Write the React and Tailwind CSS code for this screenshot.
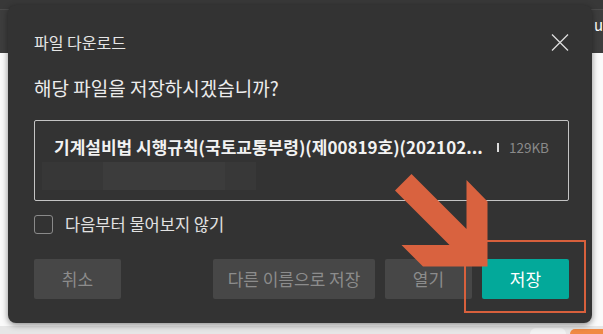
const FONT = { fontFamily: '"Noto Sans CJK KR", "Noto Sans", sans-serif' }

function Arrow() {
  // big orange-red pointer aimed at the save button
  return (
    <svg className="absolute left-0 top-0 pointer-events-none" width="603" height="334" viewBox="0 0 603 334">
      <polygon
        points="411.5,174 466.5,229 466.5,180 487.5,201.5 487.5,266.5 423,266.5 401.5,245 449.5,245 395,190.5"
        fill="#d9623f"
      />
    </svg>
  )
}

function CloseIcon() {
  return (
    <svg width="18" height="17" viewBox="0 0 18 17" className="text-[#dedede]">
      <path d="M1 0.5L17 16.5M17 0.5L1 16.5" stroke="currentColor" strokeWidth="1.3" fill="none" />
    </svg>
  )
}

function Btn({ children, className }) {
  return (
    <div className={`h-[40px] rounded-[2px] flex items-center justify-center text-[17px] ${className}`}>
      {children}
    </div>
  )
}

export default function App() {
  return (
    <div className="relative w-[603px] h-[334px] overflow-hidden bg-white flex flex-col" style={FONT}>
      {/* browser chrome behind the dialog */}
      <div className="h-[10px] bg-[#383838] border-b border-[#4b4b4b]" />
      <div className="h-[43px] bg-[#3d3d3d] flex items-center overflow-hidden">
        <span className="text-white text-[15px] ml-[594px] mb-[12px] whitespace-nowrap">ui</span>
      </div>
      <div className="flex-1 bg-[#fafafa]" />
      <div className="h-[8px] bg-[#e6e6e6] flex items-end justify-end">
        <div className="w-[36px] h-[6px] bg-[#f2f2f2] rounded-tl-[6px] rounded-tr-[6px] mr-[4px]" />
        <div className="w-[33px] h-[5px] bg-[#f08a44] rounded-tl-[6px]" />
      </div>

      {/* dialog */}
      <div className="absolute left-[8px] top-[5px] w-[584px] h-[318px] rounded-[8px] bg-[#333333] shadow-[0_2px_6px_rgba(0,0,0,0.45)] flex flex-col pl-[26px] pr-[23px]">
        <div className="flex items-center justify-between h-[24px] mt-[25px]">
          <span className="text-[16px] text-[#e6e6e6]">파일 다운로드</span>
          <CloseIcon />
        </div>
        <div className="h-[26px] mt-[21px] flex items-center text-[19px] text-[#ececec]">
          해당 파일을 저장하시겠습니까?
        </div>
        <div className="mt-[19px] h-[81px] border border-[#c4c4c4] rounded-[2px] flex flex-col">
          <div className="flex items-center h-[28px] mt-[12px] pl-[19px]">
            <span className="text-[17px] font-bold text-[#f2f2f2] whitespace-nowrap">
              기계설비법 시행규칙(국토교통부령)(제00819호)(202102...
            </span>
            <span className="ml-auto w-[2px] h-[9px] bg-[#dcdcdc]" />
            <span className="ml-[10px] mr-[19px] text-[13.5px] text-[#8a8a8a]">129KB</span>
          </div>
          <div className="flex h-[28px] mt-[1px] ml-[7px]">
            <div className="w-[61px] bg-[#373737]" />
            <div className="w-[122px] bg-[#3c3c3c]" />
            <div className="w-[31px] bg-[#383838]" />
          </div>
        </div>
        <div className="flex items-center mt-[14px] h-[19px]">
          <div className="w-[19px] h-[19px] rounded-[3px] border-[1.5px] border-[#8a8a8a]" />
          <span className="ml-[12px] text-[16.5px] text-[#e2e2e2]">다음부터 물어보지 않기</span>
        </div>
        <div className="flex items-center mt-[25px]">
          <Btn className="w-[87px] bg-[#474747] text-[#8c8c8c]">취소</Btn>
          <Btn className="w-[162px] ml-auto bg-[#474747] text-[#8c8c8c]">다른 이름으로 저장</Btn>
          <Btn className="w-[87px] ml-[10px] bg-[#474747] text-[#8c8c8c]">열기</Btn>
          <Btn className="w-[87px] ml-[10px] bg-[#03a99a] text-white">저장</Btn>
        </div>
      </div>

      {/* annotation highlight */}
      <div className="absolute left-[464px] top-[240px] w-[122px] h-[73px] border-2 border-[#d8603c]" />
      <Arrow />
    </div>
  )
}
